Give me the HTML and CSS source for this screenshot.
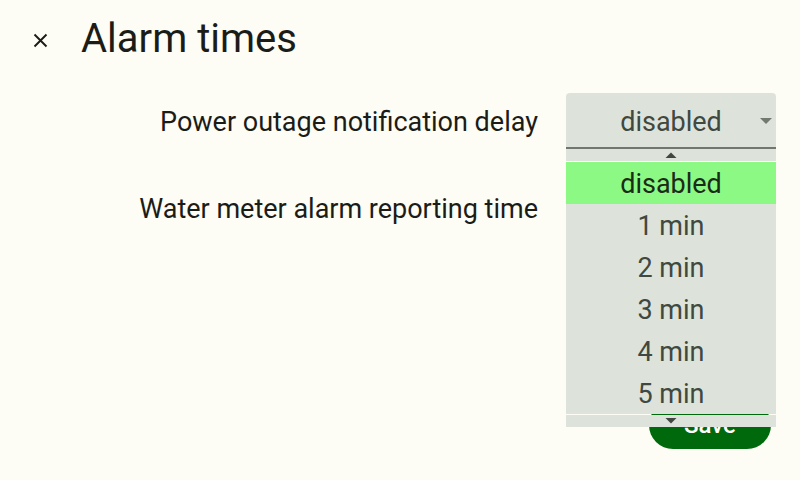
FILE: index.html
```html
<!DOCTYPE html>
<html lang="en">
<head>
<meta charset="utf-8">
<title>Alarm times</title>
<link rel="stylesheet" href="styles.css">
</head>
<body>
<div class="page">
  <header class="header">
    <button class="close" aria-label="Close">
      <svg width="15" height="15" viewBox="0 0 15 15"><path d="M1.5 1.5 L13.5 13.5 M13.5 1.5 L1.5 13.5" stroke="#1b1c18" stroke-width="1.9" fill="none"/></svg>
    </button>
    <h1 class="title">Alarm times</h1>
  </header>
  <main class="form">
    <div class="label">Power outage notification delay</div>
    <div class="field">
      <div class="select">
        <span class="value">disabled</span>
        <svg class="caret" width="12" height="6" viewBox="0 0 12 6"><path d="M0 0 L12 0 L6 6 Z" fill="#72796f"/></svg>
      </div>
      <div class="dropdown">
        <div class="scroll"><svg width="12" height="6" viewBox="0 0 12 6"><path d="M0.5 6 L11.5 6 L6 0.5 Z" fill="#41473e"/></svg></div>
        <div class="items">
          <div class="item selected">disabled</div>
          <div class="item">1 min</div>
          <div class="item">2 min</div>
          <div class="item">3 min</div>
          <div class="item">4 min</div>
          <div class="item">5 min</div>
        </div>
        <div class="scroll"><svg width="12" height="6" viewBox="0 0 12 6"><path d="M0.5 0 L11.5 0 L6 5.5 Z" fill="#41473e"/></svg></div>
      </div>
    </div>
    <div class="label">Water meter alarm reporting time</div>
    <div class="field">
      <div class="select">
        <span class="value">disabled</span>
        <svg class="caret" width="12" height="6" viewBox="0 0 12 6"><path d="M0 0 L12 0 L6 6 Z" fill="#72796f"/></svg>
      </div>
    </div>
  </main>
  <footer class="footer">
    <button class="save">Save</button>
  </footer>
</div>
</body>
</html>
```
FILE: styles.css
```css
* { box-sizing: border-box; }
html, body {
  margin: 0;
  padding: 0;
  background: #fdfdf5;
}
body {
  font-family: Roboto, "Liberation Sans", sans-serif;
  color: #1b1c18;
}
.page {
  width: 800px;
  height: 480px;
  display: flex;
  flex-direction: column;
  overflow: hidden;
}
.header {
  height: 80px;
  display: flex;
  align-items: center;
  padding-left: 32px;
}
.close {
  width: 16px;
  height: 16px;
  padding: 0;
  border: 0;
  background: transparent;
  display: flex;
  align-items: center;
  justify-content: center;
  margin-right: 33px;
}
.title {
  margin: 0;
  font-size: 40px;
  font-weight: 400;
  line-height: 48px;
  color: #1b1c18;
  position: relative;
  top: -1px;
}
.form {
  margin-top: 13px;
  display: grid;
  grid-template-columns: 1fr 210px;
  column-gap: 27px;
  row-gap: 31px;
  padding: 0 24px;
  align-items: center;
}
.label {
  text-align: right;
  font-size: 27px;
  line-height: 32px;
  color: #1b1c18;
  padding: 2px 1px 0 0;
}
.field {
  position: relative;
}
.select {
  position: relative;
  height: 56px;
  background: #dde3da;
  border-radius: 4px 4px 0 0;
  border-bottom: 2px solid #70786d;
  display: flex;
  align-items: center;
  justify-content: center;
  padding-top: 4px;
}
.value {
  font-size: 27px;
  line-height: 32px;
  color: #41483f;
}
.caret {
  position: absolute;
  right: 4px;
  top: 25px;
}
.dropdown {
  position: absolute;
  top: 56px;
  left: 0;
  width: 210px;
  display: flex;
  flex-direction: column;
  gap: 1px;
  z-index: 10;
}
.scroll {
  height: 12px;
  background: #dde3da;
  display: flex;
  align-items: center;
  justify-content: center;
}
.items {
  display: flex;
  flex-direction: column;
}
.item {
  height: 42px;
  background: #dde3da;
  display: flex;
  align-items: center;
  justify-content: center;
  padding-top: 2px;
  font-size: 27px;
  color: #41483f;
}
.item.selected {
  background: #8cf985;
  color: #1a2b17;
}
.footer {
  margin-top: auto;
  display: flex;
  justify-content: flex-end;
  padding: 0 29px 31px 0;
}
.save {
  width: 122px;
  height: 48px;
  border: 0;
  border-radius: 24px;
  background: #00690b;
  color: #ffffff;
  font-family: Roboto, "Liberation Sans", sans-serif;
  font-size: 24px;
  font-weight: 500;
}
```
